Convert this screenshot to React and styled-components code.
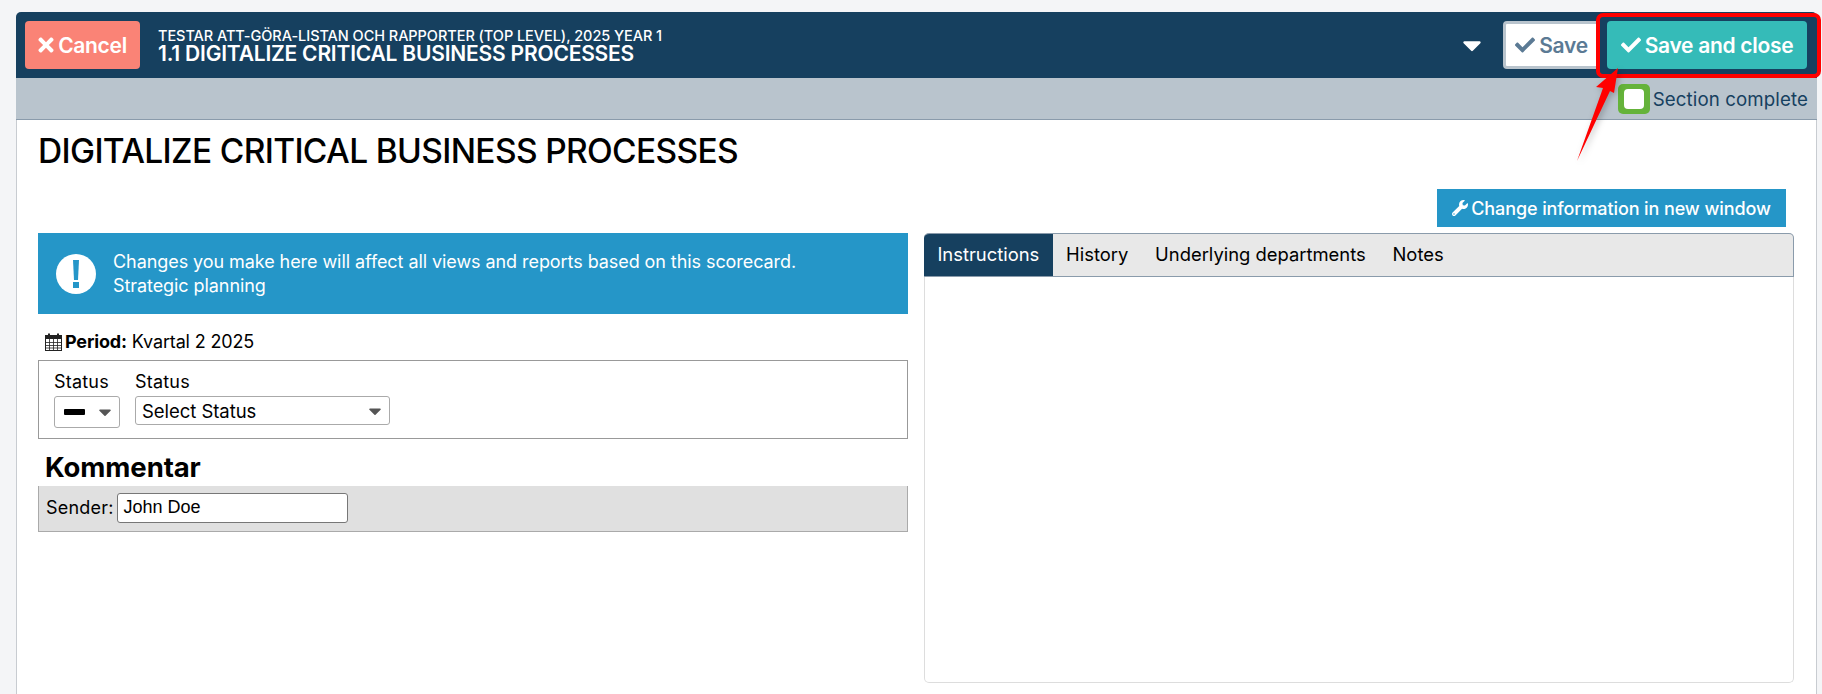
import React from "react";
import styled, { createGlobalStyle } from "styled-components";
import { FaCheck, FaTimes, FaWrench, FaCaretDown } from "react-icons/fa";

const GlobalStyle = createGlobalStyle`
  html, body {
    margin: 0;
    height: 100%;
    overflow: hidden;
    background: #f4f5f7;
    font-family: "Inter", "Liberation Sans", sans-serif;
    color: #000;
  }
  * { box-sizing: border-box; }
`;

const Panel = styled.div`
  position: relative;
  width: 1801px;
  height: 682px;
  margin: 12px 0 0 16px;
  background: #fff;
  border-left: 1px solid #c8ccd1;
  border-right: 1px solid #c8ccd1;
  border-radius: 5px 5px 0 0;
`;

const Header = styled.header`
  display: flex;
  align-items: center;
  height: 66px;
  margin: 0 -1px;
  padding: 0 10px 0 9px;
  background: #16405f;
  border-radius: 5px 5px 0 0;
`;

const HeaderButton = styled.button`
  display: flex;
  align-items: center;
  justify-content: center;
  gap: 4px;
  height: 48px;
  padding: 0;
  border-radius: 4px;
  font: 600 21px "Inter", sans-serif;
  letter-spacing: -0.3px;
  width: ${(p) => p.$width}px;
  color: ${(p) => p.$color};
  background: ${(p) => p.$bg};
  border: ${(p) => (p.$outlined ? "3px solid #b9c4cd" : "none")};
  svg { font-size: 20px; }
`;

const CancelIcon = styled(FaTimes)`
  && { font-size: 22px; width: 16px; }
`;

const Titles = styled.div`
  flex: 1;
  margin-left: 18px;
  color: #fff;
  text-transform: uppercase;
`;

const Crumb = styled.div`
  font-size: 14.5px;
  line-height: 15px;
  letter-spacing: -0.05px;
  font-weight: 500;
  margin-top: 2px;
`;

const SectionTitle = styled.div`
  font-size: 21px;
  line-height: 21px;
  font-weight: 600;
  letter-spacing: -0.2px;
`;

const HeaderCaret = styled(FaCaretDown)`
  color: #fff;
  font-size: 30px;
  margin-right: 16px;
`;

const SaveGap = styled.div`
  width: 7px;
`;

const SubBar = styled.div`
  display: flex;
  align-items: center;
  justify-content: flex-end;
  gap: 3px;
  height: 42px;
  padding: 1px 9px 0 0;
  margin: 0 -1px;
  background: #b9c4cd;
  border-bottom: 1px solid #8a9bab;
  color: #16405f;
  font-size: 18.7px;
  letter-spacing: 0.1px;
`;

const CompleteBox = styled.span`
  display: block;
  width: 32px;
  height: 30px;
  padding: 5px 6px;
  background: #65b33a;
  border-radius: 5px;
  &::before {
    content: "";
    display: block;
    width: 100%;
    height: 100%;
    background: #fff;
    border-radius: 4px;
  }
`;

const PageTitle = styled.h1`
  margin: 0;
  padding: 11px 0 0 21px;
  height: 69px;
  font-size: 33.5px;
  line-height: 40px;
  font-weight: 500;
  letter-spacing: -0.65px;
`;

const ToolRow = styled.div`
  display: flex;
  justify-content: flex-end;
  padding-right: 30px;
  margin-bottom: 6px;
`;

const ToolButton = styled.button`
  display: flex;
  align-items: center;
  justify-content: center;
  gap: 3px;
  width: 349px;
  height: 38px;
  padding: 0;
  border: none;
  color: #fff;
  background: #2596c8;
  font: 500 18px "Inter", sans-serif;
  letter-spacing: -0.1px;
  svg { font-size: 16px; }
`;

const Columns = styled.div`
  display: grid;
  grid-template-columns: 870px 870px;
  gap: 16px;
  padding: 0 21px;
`;

const Alert = styled.div`
  display: flex;
  align-items: center;
  height: 81px;
  padding-left: 18px;
  color: #fff;
  background: #2596c8;
  font-size: 18px;
  line-height: 24px;
  letter-spacing: -0.07px;
`;

const AlertDot = styled.span`
  display: flex;
  align-items: center;
  justify-content: center;
  flex: none;
  width: 40px;
  height: 40px;
  margin-right: 17px;
  border-radius: 50%;
  background: #fff;
`;

const PeriodRow = styled.div`
  display: flex;
  align-items: center;
  height: 46px;
  padding: 9px 0 0 7px;
  font-size: 18px;
  letter-spacing: -0.15px;
  white-space: pre;
  svg { margin-right: 3px; }
  b { font-weight: 700; }
`;

const StatusBox = styled.div`
  display: flex;
  gap: 15px;
  height: 79px;
  padding: 10px 15px;
  border: 1px solid #999;
`;

const Field = styled.div`
  display: flex;
  flex-direction: column;
  gap: 3px;
`;

const FieldLabel = styled.div`
  font-size: 18px;
  line-height: 22px;
  letter-spacing: 0.2px;
`;

const FakeSelect = styled.div`
  display: flex;
  align-items: center;
  justify-content: space-between;
  width: ${(p) => p.$width}px;
  height: ${(p) => p.$height}px;
  padding: 0 4px 0 6px;
  background: #fff;
  border: 1px solid #aaa;
  border-radius: 3px;
  font-size: 18.5px;
  letter-spacing: -0.05px;
  svg { color: #555; font-size: 20px; }
`;

const Dash = styled.span`
  display: block;
  width: 21px;
  height: 6px;
  margin-left: 3px;
  background: #000;
  border-radius: 1px;
`;

const CommentHeading = styled.h2`
  margin: 0;
  padding: 10px 0 0 7px;
  height: 47px;
  font-size: 27.5px;
  line-height: 37px;
  font-weight: 700;
  letter-spacing: -0.1px;
`;

const SenderBar = styled.div`
  display: flex;
  align-items: center;
  gap: 3px;
  height: 46px;
  padding: 0 0 2px 7px;
  background: #e0e0e0;
  border-left: 1px solid #aaa;
  border-right: 1px solid #aaa;
  border-bottom: 1px solid #aaa;
  font-size: 18px;
  letter-spacing: 0.2px;
`;

const SenderInput = styled.div`
  display: flex;
  align-items: center;
  width: 231px;
  height: 30px;
  padding-left: 6px;
  background: #fff;
  border: 1px solid #777;
  border-radius: 3px;
  font-family: "Liberation Sans", Arial, sans-serif;
  letter-spacing: 0;
`;

const TabsPane = styled.div`
  height: 450px;
  border: 1px solid #ddd;
  border-top: none;
  border-radius: 5px;
`;

const TabList = styled.div`
  display: flex;
  height: 44px;
  margin: 0 -1px;
  background: #e8e8e8;
  border: 1px solid #8a9bab;
  border-left: none;
  border-radius: 5px 5px 0 0;
  overflow: hidden;
`;

const Tab = styled.div`
  display: flex;
  align-items: center;
  padding: 0 13.4px 3px;
  font-size: 18.4px;
  color: ${(p) => (p.$active ? "#fff" : "#000")};
  background: ${(p) => (p.$active ? "#16405f" : "transparent")};
`;

const CalloutFrame = styled.div`
  position: absolute;
  top: 1px;
  left: 1579px;
  width: 225px;
  height: 65px;
  border: 4px solid #f00;
  border-radius: 7px;
  pointer-events: none;
`;

const CalloutArrow = styled.svg`
  position: absolute;
  top: 55px;
  left: 1550px;
  width: 80px;
  height: 100px;
  filter: drop-shadow(2px 2px 3px rgba(0, 0, 0, 0.25));
`;

const CalendarIcon = () => (
  <svg width="17" height="18" viewBox="0 0 17 18" fill="none">
    <rect x="0.5" y="2.5" width="16" height="15" stroke="#222" />
    <rect x="0" y="2" width="17" height="4" fill="#222" />
    <path d="M4 0.5v3.5M13 0.5v3.5" stroke="#222" strokeWidth="2" />
    <path d="M0 9.5h17M0 12.5h17M0 15h17M4.5 6v12M8.5 6v12M12.5 6v12" stroke="#222" strokeWidth="0.8" />
  </svg>
);

const ExclamationIcon = () => (
  <svg width="8" height="28" viewBox="0 0 8 28">
    <path d="M1 0h6l-1 20H2z" fill="#2596c8" />
    <rect x="1" y="22" width="6" height="6" fill="#2596c8" />
  </svg>
);

export default function App() {
  return (
    <>
      <GlobalStyle />
      <Panel>
        <Header>
          <HeaderButton $width={115} $color="#fff" $bg="#fa8376">
            <CancelIcon />
            Cancel
          </HeaderButton>
          <Titles>
            <Crumb>Testar att-göra-listan och rapporter (Top Level), 2025 Year 1</Crumb>
            <SectionTitle>1.1 Digitalize critical business processes</SectionTitle>
          </Titles>
          <HeaderCaret />
          <HeaderButton $width={97} $color="#5b7a94" $bg="#fff" $outlined>
            <FaCheck />
            Save
          </HeaderButton>
          <SaveGap />
          <HeaderButton $width={200} $color="#fff" $bg="#35bbb8">
            <FaCheck />
            Save and close
          </HeaderButton>
        </Header>
        <SubBar>
          <CompleteBox />
          Section complete
        </SubBar>
        <PageTitle>DIGITALIZE CRITICAL BUSINESS PROCESSES</PageTitle>
        <ToolRow>
          <ToolButton>
            <FaWrench />
            Change information in new window
          </ToolButton>
        </ToolRow>
        <Columns>
          <div>
            <Alert>
              <AlertDot>
                <ExclamationIcon />
              </AlertDot>
              <div>
                Changes you make here will affect all views and reports based on this scorecard.
                <br />
                Strategic planning
              </div>
            </Alert>
            <PeriodRow>
              <CalendarIcon />
              <b>Period:</b> Kvartal 2 2025
            </PeriodRow>
            <StatusBox>
              <Field>
                <FieldLabel>Status</FieldLabel>
                <FakeSelect $width={66} $height={32}>
                  <Dash />
                  <FaCaretDown />
                </FakeSelect>
              </Field>
              <Field>
                <FieldLabel>Status</FieldLabel>
                <FakeSelect $width={255} $height={29}>
                  Select Status
                  <FaCaretDown />
                </FakeSelect>
              </Field>
            </StatusBox>
            <CommentHeading>Kommentar</CommentHeading>
            <SenderBar>
              Sender:
              <SenderInput>John Doe</SenderInput>
            </SenderBar>
          </div>
          <TabsPane>
            <TabList>
              <Tab $active>Instructions</Tab>
              <Tab>History</Tab>
              <Tab>Underlying departments</Tab>
              <Tab>Notes</Tab>
            </TabList>
          </TabsPane>
        </Columns>
        <CalloutFrame />
        <CalloutArrow viewBox="0 0 80 100">
          <polygon points="10,94 36,21 29,20 51,1 47,26 43,24" fill="#f00" />
        </CalloutArrow>
      </Panel>
    </>
  );
}
